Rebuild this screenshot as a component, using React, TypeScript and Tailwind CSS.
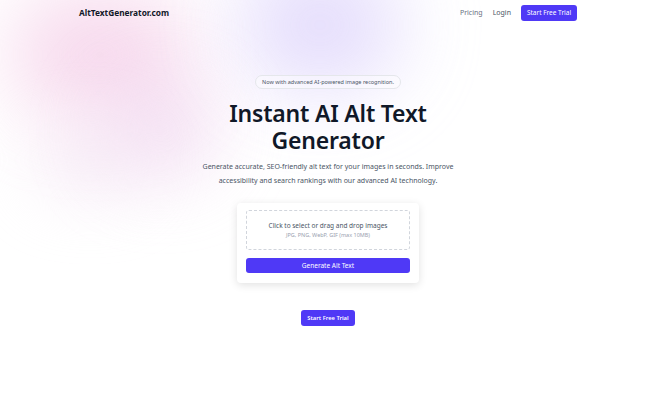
import React from "react";

export default function App() {
  return (
    <div
      className="relative w-[650px] h-[414px] overflow-hidden bg-white text-gray-900"
      style={{ fontFamily: '"Noto Sans", "Open Sans", sans-serif' }}
    >
      {/* background blobs */}
      <div className="pointer-events-none absolute inset-0">
        <div className="absolute left-[10px] top-[-10px] w-[180px] h-[130px] rounded-full bg-[#f2c2e2] opacity-60 blur-[38px]" />
        <div className="absolute left-[240px] top-[-40px] w-[160px] h-[130px] rounded-full bg-[#d9cefb] opacity-70 blur-[40px]" />
        <div className="absolute left-[100px] top-[80px] w-[120px] h-[100px] rounded-full bg-[#eed2ee] opacity-60 blur-[35px]" />
        <div className="absolute left-[30px] top-[120px] w-[120px] h-[80px] rounded-full bg-[#f3e4f3] opacity-50 blur-[30px]" />
      </div>

      <div className="relative pl-[6px]">
        {/* Nav */}
        <nav className="mx-auto w-[498px] h-[26px] flex items-center justify-between">
          <span className="text-[8.3px] font-bold text-gray-900">AltTextGenerator.com</span>
          <div className="flex items-center gap-[10px] text-[7px]">
            <span className="text-gray-500">Pricing</span>
            <span className="text-gray-600">Login</span>
            <span className="bg-indigo-600 text-white rounded-[3px] w-[56px] justify-center h-[16px] flex items-center text-[6.5px]">Start Free Trial</span>
          </div>
        </nav>

        {/* Hero */}
        <div className="flex flex-col items-center mt-[49px]">
          <div className="h-[14px] px-[6px] flex items-center rounded-full border border-gray-200 bg-white/40 text-[5.5px] text-gray-600">
            Now with advanced AI-powered image recognition.
          </div>
          <h1 className="mt-[11px] text-center text-[23px] leading-[27px] font-semibold text-gray-900 tracking-[-0.2px]">
            <span className="block">Instant AI Alt Text</span>
            <span className="block">Generator</span>
          </h1>
          <p className="mt-[6px] text-center text-[7px] leading-[14px] text-gray-600 whitespace-nowrap">
            Generate accurate, SEO-friendly alt text for your images in seconds. Improve
            <br />
            accessibility and search rankings with our advanced AI technology.
          </p>

          {/* Card */}
          <div className="mt-[15px] w-[182px] bg-white rounded-[4px] shadow-[0_2px_8px_rgba(0,0,0,0.12)] px-[9px] pt-[7px] pb-[10px]">
            <div className="h-[40px] border border-dashed border-gray-300 rounded-[3px] flex flex-col items-center justify-center">
              <span className="text-[6.5px] text-gray-600 leading-[10px]">Click to select or drag and drop images</span>
              <span className="text-[5.5px] text-gray-400 leading-[9px]">JPG, PNG, WebP, GIF (max 10MB)</span>
            </div>
            <div className="mt-[8px] h-[15px] bg-indigo-600 rounded-[3px] flex items-center justify-center text-white text-[6.5px]">
              Generate Alt Text
            </div>
          </div>

          <div className="mt-[27px] h-[16px] px-[6px] bg-indigo-600 rounded-[3px] flex items-center text-white text-[5.8px] font-semibold">
            Start Free Trial
          </div>
        </div>
      </div>
    </div>
  );
}
